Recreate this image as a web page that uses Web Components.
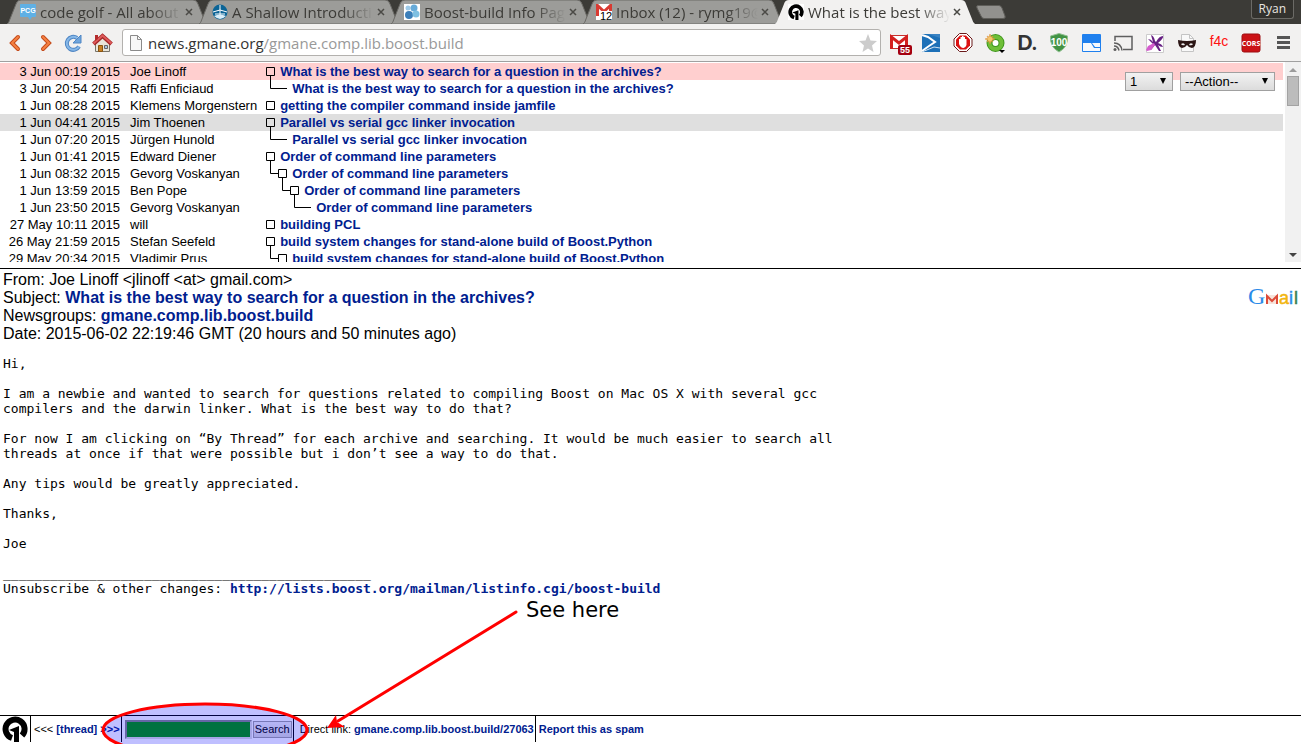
<!DOCTYPE html>
<html lang="en">
<head>
<meta charset="utf-8">
<title>What is the best way to search for a question in the archives?</title>
<style>
  html, body {
    height: 100%;
  }
  body {
    margin: 0;
    display: flex;
    flex-direction: column;
    position: relative;
    overflow: hidden;
    background: #fff;
    color: #000;
    font-family: "Liberation Sans", Arial, sans-serif;
    --link: #00208f;
    --chrome: #f2f1f0;
    --ui-font: "Open Sans", "Noto Sans", sans-serif;
  }
  mail-message {
    flex: 1;
  }
</style>
</head>
<body>
  <tab-strip user="Ryan">
    <browser-tab label="code golf - All about">
      <svg slot="icon" width="16" height="16" viewBox="0 0 16 16"><path fill="#5fb0e5" d="M1 0h14q1 0 1 1v11q0 1-1 1h-3l-2 3-2-3H1q-1 0-1-1V1q0-1 1-1z"/><text x="8" y="9" font-size="7" font-weight="bold" text-anchor="middle" fill="#fff" font-family="Liberation Sans, sans-serif">PCG</text></svg>
    </browser-tab>
    <browser-tab label="A Shallow Introducti">
      <svg slot="icon" width="16" height="16" viewBox="0 0 16 16"><circle cx="8" cy="8" r="7.5" fill="#0b6496"/><path d="M8 1v10M1 8l7-2 7 2M3 10h10" stroke="#fff" fill="none"/><path d="M2 12q6-3 12 0-6 6-12 0z" fill="#d9edf7"/></svg>
    </browser-tab>
    <browser-tab label="Boost-build Info Pag">
      <svg slot="icon" width="16" height="16" viewBox="0 0 16 16"><path fill="#fff" d="M0 0h16v16H0z"/><circle cx="4" cy="4" r="2.5" fill="#9ecae8"/><circle cx="10" cy="4" r="3.5" fill="#67abd9"/><circle cx="5" cy="11" r="4" fill="#3d7fb9"/><circle cx="12" cy="10" r="3.5" fill="#7fc0e2"/></svg>
    </browser-tab>
    <browser-tab label="Inbox (12) - rymg19@">
      <svg slot="icon" width="16" height="16" viewBox="0 0 16 16"><path fill="#fff" d="M0 0h16v16H0z"/><path d="M1.500 12V1.500L8 7.500l6.500-6V8" fill="none" stroke="#d93a32" stroke-width="3"/><path fill="#fff" d="M3 7h13v9H3z"/><text x="10" y="16" font-size="11" text-anchor="middle" font-family="Liberation Sans, sans-serif">12</text></svg>
    </browser-tab>
    <browser-tab label="What is the best way" active>
      <svg slot="icon" width="16" height="16" viewBox="0 0 26 26"><path fill="#fff" d="M0 0h26v26H0z"/><path d="M10 22A9.500 9.500 0 1 1 20 19.500" fill="none" stroke="#000" stroke-width="6"/><path d="M7 14l10-4v16h-5V16z"/></svg>
    </browser-tab>
  </tab-strip>

  <browser-toolbar host="news.gmane.org" path="/gmane.comp.lib.boost.build"></browser-toolbar>
  <thread-list></thread-list>

  <mail-message>
    <span slot="from">Joe Linoff &lt;jlinoff &lt;at&gt; gmail.com&gt;</span>
    <mail-link slot="subject" href="#subject">What is the best way to search for a question in the archives?</mail-link>
    <mail-link slot="groups" href="#group">gmane.comp.lib.boost.build</mail-link>
    <span slot="date">2015-06-02 22:19:46 GMT (20 hours and 50 minutes ago)</span>
    <span slot="body">Hi,

I am a newbie and wanted to search for questions related to compiling Boost on Mac OS X with several gcc
compilers and the darwin linker. What is the best way to do that?

For now I am clicking on “By Thread” for each archive and searching. It would be much easier to search all
threads at once if that were possible but i don’t see a way to do that.

Any tips would be greatly appreciated.

Thanks,

Joe

_______________________________________________
Unsubscribe &amp; other changes: <mail-link href="#list">http://lists.boost.org/mailman/listinfo.cgi/boost-build</mail-link></span>
  </mail-message>

  <archive-footer></archive-footer>
  <callout-note label="See here"></callout-note>

<script>
//Link used in message headers and bodies
class MailLink extends HTMLElement {
  constructor() {
    super();
    this._root = this.attachShadow({ mode: "open" });
  }

  connectedCallback() {
    //No line breaks round the link, it can stand in preformatted text
    this._root.innerHTML = `<style>
      :host { display: inline; }
      a { color: var(--link); font-weight: bold; text-decoration: none; }
    </style><a href="${this.getAttribute("href")}"><slot></slot></a>`;
  }
}
customElements.define("mail-link", MailLink);

class BrowserTab extends HTMLElement {
  constructor() {
    super();
    this._root = this.attachShadow({ mode: "open" });
  }

  connectedCallback() {
    const active = this.hasAttribute("active");
    this._root.innerHTML = `
    <style>
      :host {
        display: flex;
        align-items: center;
        flex: 0 1 200px;
        box-sizing: border-box;
        min-width: 0;
        height: 24px;
        margin-right: -8px;
        padding: 0 13px;
        position: relative;
        color: #3c3b37;
      }
      :host([active]) { z-index: 1; }
      .shape {
        position: absolute;
        inset: 0;
        width: 100%;
        height: 100%;
      }
      ::slotted(svg), .title, button { position: relative; }
      ::slotted(svg) { flex: none; }
      .title {
        flex: 1;
        margin: 0 2px 0 4px;
        overflow: hidden;
        white-space: nowrap;
        font: 15px/22px var(--ui-font);
        -webkit-mask-image: linear-gradient(to left, transparent, #000 32px);
        mask-image: linear-gradient(to left, transparent, #000 32px);
      }
      button {
        flex: none;
        display: flex;
        width: 10px;
        height: 24px;
        padding: 0;
        align-items: center;
        border: 0;
        background: none;
      }
    </style>
    <svg class="shape" viewBox="0 0 200 24" preserveAspectRatio="none" aria-hidden="true">
      <path d="M0 24Q2 23 3 19L9 4Q10 0 14 0H186Q190 0 191 4L197 19Q198 23 200 24Z"
        fill="${active ? "#f2f1f0" : "#9c9c99"}" stroke="${active ? "none" : "#6b6a66"}"/>
    </svg>
    <slot name="icon"></slot>
    <span class="title">${this.getAttribute("label")}</span>
    <button type="button" aria-label="Close tab">
      <svg width="10" height="10" viewBox="0 0 10 10"><path d="M2 2l6 6M8 2l-6 6" stroke="#4b4a46" stroke-width="1.500"/></svg>
    </button>`;
  }
}
customElements.define("browser-tab", BrowserTab);

class TabStrip extends HTMLElement {
  constructor() {
    super();
    this._root = this.attachShadow({ mode: "open" });
  }

  connectedCallback() {
    this._root.innerHTML = `
    <style>
      :host {
        display: flex;
        flex: none;
        height: 24px;
        padding: 0 7px;
        background: #3c3b37;
      }
      .tabs { display: flex; flex: 1; min-width: 0; }
      .new {
        flex: none;
        width: 32px;
        height: 24px;
        margin-left: 8px;
        padding: 0;
        border: 0;
        background: none;
      }
      .user {
        flex: none;
        height: 19px;
        padding: 0 7px;
        border: 1px solid #6b6a66;
        border-top: 0;
        border-radius: 0 0 3px 3px;
        background: #33322e;
        color: #e8e6e0;
        font: 12px/18px var(--ui-font);
      }
    </style>
    <div class="tabs">
      <slot></slot>
      <button class="new" type="button" aria-label="New tab">
        <svg width="32" height="24" viewBox="0 0 32 24"><path d="M3 5.500H24Q26 5.500 27 8L30 16Q31 18.500 28 18.500H9Q7 18.500 6 16L2 8Q1 5.500 3 5.500z" fill="#92918e" stroke="#5e5d59"/></svg>
      </button>
    </div>
    <button class="user" type="button">${this.getAttribute("user")}</button>`;
  }
}
customElements.define("tab-strip", TabStrip);

//Toolbar icons, all drawn in a 24px square
const textAttrs = `font-family="Liberation Sans, sans-serif" font-weight="bold" text-anchor="middle"`;
const extensions = [
  ["Mail checker", `<path fill="#fff" stroke="#c9302c" d="M3.500 4.500h17v13h-17z"/><path d="M4.500 18V6l7.500 6 7.500-6v9" fill="none" stroke="#d3201f" stroke-width="3"/><rect x="11" y="14" width="14" height="10" rx="2" fill="#a4000f"/><text x="18" y="22" font-size="9" fill="#fff" ${textAttrs}>55</text>`],
  ["Scripts", `<path fill="#1d70b7" d="M3 3h18v18H3z"/><path d="M3 4l6 2 7 5-6 4-7 5" fill="none" stroke="#fff" stroke-width="2"/><path d="M3 21l12-5 6 1" fill="none" stroke="#cfe2f2"/><path d="M9 3l12 4V3z" fill="#3a83c3"/>`],
  ["Ad blocker", `<path d="M8.500 2.500h7l5.500 5.500v7l-5.500 5.500h-7L3 15V8z" fill="#fff" stroke="#6b1a1a"/><path d="M9 4.500h6L19 8.500v6L15 18.500H9L5 14.500v-6z" fill="#dc1313"/><path fill="#fff" d="M8 8h1.500v3V6H11v4V5h1.500v5V6H14v5V8h1.500v6q-1 3-3 3-3 0-4.500-4z"/>`],
  ["Image search", `<circle cx="12.500" cy="12" r="6" fill="#fff" stroke="#3f961d" stroke-width="6"/><circle cx="12.500" cy="12" r="6" fill="none" stroke="#6fbf38" stroke-width="4"/><path fill="#f5c56b" stroke="#d9872f" stroke-width=".5" d="M7 3l1 3 2-1-1 2 3 1-3 1 1 2-2-1-1 3-1-3-2 1 1-2-3-1 3-1-1-2 2 1z"/><path d="M16 19h6l-3 3z"/>`],
  ["Disconnect", `<text x="12" y="19" font-size="20" fill="#333" font-family="Lato, sans-serif" font-weight="900" text-anchor="middle">D.</text>`],
  ["Shield", `<path fill="#429344" stroke="#8fbf8f" d="M12 2.500l8.500 2.500q1 11-8.500 16-9.500-5-8.500-16z"/><text x="12" y="15" font-size="10" fill="#fff" ${textAttrs}>100</text>`],
  ["Window", `<rect x="3" y="3" width="19" height="18" rx="1" fill="#1f80ee"/><path fill="#f7f9fc" d="M4 12h8l3 5h6v3H4z"/><path fill="#f7f9fc" d="M13 12h8v4h-5z"/>`],
  ["Cast", `<path d="M4 10V5.500h17v13h-9" fill="none" stroke="#5f5f5f" stroke-width="1.500"/><path d="M3 12q7 0 8 7.500M3 15q4 0 5 4.500" fill="none" stroke="#5f5f5f" stroke-width="1.500"/><circle cx="4" cy="18.500" r="1.500" fill="#5f5f5f"/>`],
  ["Insect", `<path fill="#fff" stroke="#ccc" d="M3.500 3.500h17v18h-17z"/><path fill="#672083" d="M8 4q3 1 4 6l1 1q3-6 7-6 1 2-5 7 4 1 5 4-3 0-5-2l3 6-2 0-4-6-4 5-1-1 3-5-5-5q3 0 5 3z"/><path d="M3 19l2-4 6-3 1 2-4 5-4 1z" fill="#d55cce"/>`],
  ["Incognito filter", `<path fill="#f9f9f9" stroke="#c4c4c4" d="M6.500 3.500h8l4 4v13h-12z"/><path d="M14.500 3.500v4h4" fill="none" stroke="#c4c4c4"/><path d="M3 9q9 2 18 0 0 7-4 8-3 0-5-3-2 3-5 3-4-1-4-8z" fill="#2b1514"/><path d="M6 13q3-2 4 1-3 1-4-1zM14 14q1-3 4-1-1 2-4 1z" fill="#eee"/>`],
  ["f4c", `<text x="12" y="15" font-size="14" fill="#f11" font-family="Liberation Sans, sans-serif" text-anchor="middle">f4c</text>`],
  ["CORS", `<rect x="3" y="3" width="18" height="18" rx="2" fill="#cb1216" stroke="#9d0d10"/><text x="12" y="15" font-size="7" fill="#fff" font-family="Open Sans, sans-serif" font-weight="bold" text-anchor="middle">CORS</text>`]
];
const navButtons = [
  ["Back", `<path d="M15 6l-6 6 6 6" fill="none" stroke="#c44a1a" stroke-width="4" stroke-linecap="round"/><path d="M15 6l-6 6 6 6" fill="none" stroke="#f58142" stroke-width="2" stroke-linecap="round"/>`],
  ["Forward", `<path d="M11 6l6 6-6 6" fill="none" stroke="#c44a1a" stroke-width="4" stroke-linecap="round"/><path d="M11 6l6 6-6 6" fill="none" stroke="#f58142" stroke-width="2" stroke-linecap="round"/>`],
  ["Reload", `<path d="M18 15.500A6.500 6.500 0 1 1 16 7" fill="none" stroke="#4f86c4" stroke-width="4"/><path d="M18 15.500A6.500 6.500 0 1 1 16 7" fill="none" stroke="#86b8e8" stroke-width="2"/><path d="M20 4v8h-8z" fill="#6fa5dc" stroke="#4f86c4"/>`],
  ["Home", `<path fill="#e9e6da" stroke="#77746b" d="M5.500 11v9.500h14V11l-7-6z"/><path d="M3.500 13L12.500 5l9 8" fill="none" stroke="#a72828" stroke-width="4"/><path d="M3.500 12.500l9-8 9 8" fill="none" stroke="#dd5a5a" stroke-width="2"/><path fill="#b42c2c" d="M5 4h3v4l-3 2z"/><path fill="#c98124" stroke="#8a5510" d="M8.500 14.500h4v6h-4z"/><path fill="#a9c6e4" stroke="#666" d="M14.500 14.500h3v3h-3z"/>`]
];

class BrowserToolbar extends HTMLElement {
  constructor() {
    super();
    this._root = this.attachShadow({ mode: "open" });
  }

  connectedCallback() {
    const icon = ([name, art]) => `
      <button type="button" aria-label="${name}"><svg width="24" height="24" viewBox="0 0 24 24" overflow="visible">${art}</svg></button>`;
    this._root.innerHTML = `
    <style>
      :host {
        display: flex;
        flex: none;
        align-items: center;
        height: 37px;
        background: var(--chrome);
        border-bottom: 1px solid #a0a0a0;
      }
      .group { display: flex; flex: none; }
      button {
        display: flex;
        align-items: center;
        justify-content: center;
        width: 32px;
        height: 32px;
        padding: 0;
        border: 0;
        background: none;
      }
      .nav { padding-right: 6px; }
      .nav button { width: 29px; }
      .location {
        flex: 1;
        display: flex;
        align-items: center;
        min-width: 0;
        height: 25px;
        margin-right: 2px;
        padding-left: 5px;
        border: 1px solid #b3b1ae;
        border-radius: 3px;
        background: #fff;
      }
      .url {
        flex: 1;
        margin-left: 4px;
        color: #999;
        font: 15px/24px var(--ui-font);
        text-decoration: none;
        white-space: nowrap;
        overflow: hidden;
      }
      .url span { color: #333; }
      .location button { width: 24px; height: 24px; }
      .menu { width: 34px; }
    </style>
    <div class="group nav">${navButtons.map(icon).join("")}</div>
    <div class="location">
      <svg width="16" height="18" viewBox="0 0 16 18" aria-hidden="true"><path d="M2.500 1.500h7l4 4v11h-11z" fill="#f7f7f7" stroke="#8a8a8a"/><path d="M9.500 1.500v4h4" fill="none" stroke="#8a8a8a"/></svg>
      <a class="url" href="#location"><span>${this.getAttribute("host")}</span>${this.getAttribute("path")}</a>
      <button type="button" aria-label="Bookmark"><svg width="20" height="20" viewBox="0 0 20 20"><path fill="#ccc" d="M10 1l2.500 6.500 6.500.500-5 4.500 1.500 6.500-5.500-3.500L4.500 19 6 12.500 1 8l6.500-.500z"/></svg></button>
    </div>
    <div class="group">
      ${extensions.map(icon).join("")}
      <button class="menu" type="button" aria-label="Menu"><svg width="14" height="14" viewBox="0 0 14 14"><path fill="#555" d="M0 0h13v3H0zM0 5h13v3H0zM0 10h13v3H0z"/></svg></button>
    </div>`;
  }
}
customElements.define("browser-toolbar", BrowserToolbar);

//date, author, subject, level, has box, has reply, row class
const best = "What is the best way to search for a question in the archives?";
const gcc = "Parallel vs serial gcc linker invocation";
const order = "Order of command line parameters";
const build = "build system changes for stand-alone build of Boost.Python";
const threads = [
  ["3 Jun 00:19 2015", "Joe Linoff", best, 0, true, true, "current"],
  ["3 Jun 20:54 2015", "Raffi Enficiaud", best, 1, false, false, ""],
  ["1 Jun 08:28 2015", "Klemens Morgenstern", "getting the compiler command inside jamfile", 0, true, false, ""],
  ["1 Jun 04:41 2015", "Jim Thoenen", gcc, 0, true, true, "hover"],
  ["1 Jun 07:20 2015", "Jürgen Hunold", gcc, 1, false, false, ""],
  ["1 Jun 01:41 2015", "Edward Diener", order, 0, true, true, ""],
  ["1 Jun 08:32 2015", "Gevorg Voskanyan", order, 1, true, true, ""],
  ["1 Jun 13:59 2015", "Ben Pope", order, 2, true, true, ""],
  ["1 Jun 23:50 2015", "Gevorg Voskanyan", order, 3, false, false, ""],
  ["27 May 10:11 2015", "will", "building PCL", 0, true, false, ""],
  ["26 May 21:59 2015", "Stefan Seefeld", build, 0, true, true, ""],
  ["29 May 20:34 2015", "Vladimir Prus", build, 1, true, false, ""]
];

class ThreadList extends HTMLElement {
  constructor() {
    super();
    this._root = this.attachShadow({ mode: "open" });
  }

  //Box and connector lines in front of a subject
  branch(level, box, reply) {
    const x = level * 12;
    let d = "";
    if (level > 0) {
      d += `M${x - 7.5} 0V8.500H${box ? x : x + 9}`;
    }
    if (box) {
      d += `M${x + 0.5} 4.500h8v8h-8z`;
    }
    if (reply) {
      d += `M${x + 4.5} 12V17`;
    }
    return `<svg width="${x + 14}" height="17" aria-hidden="true"><path d="${d}" fill="none" stroke="#000"/></svg>`;
  }

  connectedCallback() {
    const rows = threads.map(([date, author, subject, level, box, reply, state]) => `
      <tr class="${state}">
        <td class="date">${date}</td>
        <td class="author">${author}</td>
        <td><div class="subject">${this.branch(level, box, reply)}<a href="#article">${subject}</a></div></td>
      </tr>`).join("");
    this._root.innerHTML = `
    <style>
      :host {
        display: flex;
        flex: none;
        gap: 2px;
        height: 200px;
        padding: 0 0 6px;
        border-bottom: 1px solid #000;
        position: relative;
        font-size: 13px;
        line-height: 17px;
      }
      .rows { flex: 1; overflow: hidden; padding-top: 1px; }
      table { width: 100%; border-collapse: collapse; }
      td { padding: 0; height: 17px; white-space: nowrap; }
      .current { background: #ffcfcf; }
      .hover { background: #dfdfdf; }
      .date { width: 120px; text-align: right; }
      .author { width: 127px; padding: 0 0 0 10px; }
      td:last-child { padding-left: 9px; }
      .subject { display: flex; height: 17px; }
      .subject svg { flex: none; }
      a { color: var(--link); font-weight: bold; text-decoration: none; }
      .actions {
        position: absolute;
        top: 10px;
        right: 26px;
        display: flex;
        gap: 7px;
      }
      .pick { position: relative; display: flex; }
      select {
        appearance: none;
        box-sizing: border-box;
        height: 19px;
        padding: 0 20px 0 4px;
        border: 1px solid #a0a0a0;
        border-radius: 0;
        background: linear-gradient(#f2f2f2, #dcdcdc);
        color: #000;
        font: 13px/17px "Liberation Sans", Arial, sans-serif;
      }
      .page { width: 48px; }
      .action { width: 95px; }
      .pick svg { position: absolute; right: 7px; top: 6px; pointer-events: none; }
      .scroll {
        flex: none;
        display: flex;
        flex-direction: column;
        align-items: center;
        width: 16px;
        background: #f1f1f1;
      }
      .track { flex: 1; }
      .thumb {
        box-sizing: border-box;
        width: 12px;
        height: 30px;
        border: 1px solid #a3a3a3;
        background: #bcbcbc;
      }
    </style>
    <div class="rows"><table aria-label="Threads">${rows}</table></div>
    <div class="scroll" aria-hidden="true">
      <svg width="16" height="14"><path fill="#9c9c9c" d="M8 6l4 4H4z"/></svg>
      <div class="track"><div class="thumb"></div></div>
      <svg width="16" height="14"><path fill="#444" d="M4 5h8l-4 4z"/></svg>
    </div>
    <div class="actions">
      <label class="pick"><select class="page" aria-label="Page"><option>1</option></select><svg width="6" height="6"><path d="M0 0h6L3 6z"/></svg></label>
      <label class="pick"><select class="action" aria-label="Action"><option>--Action--</option></select><svg width="6" height="6"><path d="M0 0h6L3 6z"/></svg></label>
    </div>`;
  }
}
customElements.define("thread-list", ThreadList);

class MailMessage extends HTMLElement {
  constructor() {
    super();
    this._root = this.attachShadow({ mode: "open" });
  }

  connectedCallback() {
    this._root.innerHTML = `
    <style>
      :host {
        display: block;
        min-height: 0;
        padding: 2px 3px 0;
        overflow: hidden;
        font-size: 16px;
        line-height: 18px;
      }
      header { display: flex; justify-content: space-between; align-items: flex-start; }
      .face { flex: none; margin-top: 12px; }
      pre {
        margin: 13px 0 0;
        font: 13px/15px "DejaVu Sans Mono", monospace;
      }
    </style>
    <header>
      <div>
        <div>From: <slot name="from"></slot></div>
        <div>Subject: <slot name="subject"></slot></div>
        <div>Newsgroups: <slot name="groups"></slot></div>
        <div>Date: <slot name="date"></slot></div>
      </div>
      <svg class="face" width="50" height="24" viewBox="0 0 50 24" role="img" aria-label="Gmail">
        <text x="0" y="21" font-size="24" fill="#2b8be8" font-family="Liberation Serif, serif">G</text>
        <path fill="#f6e4dc" d="M18 12h12v9H18z"/><path d="M19 21v-8l5 5 5-5v8" fill="none" stroke="#dd4b39" stroke-width="2"/>
        <g font-size="18" font-family="Liberation Sans, sans-serif" stroke-width=".5"><text x="31" y="21" fill="#f2b50f" stroke="#f2b50f">a</text><text x="41" y="21" fill="#2b8be8" stroke="#2b8be8">i</text><text x="46" y="21" fill="#3d7d55" stroke="#3d7d55">l</text></g>
      </svg>
    </header>
    <pre><slot name="body"></slot></pre>`;
  }
}
customElements.define("mail-message", MailMessage);

class ArchiveFooter extends HTMLElement {
  constructor() {
    super();
    this._root = this.attachShadow({ mode: "open" });
  }

  connectedCallback() {
    this._root.innerHTML = `
    <style>
      :host {
        display: flex;
        flex: none;
        height: 26px;
        padding-bottom: 2px;
        border-top: 1px solid #000;
        font-size: 11px;
        line-height: 26px;
        white-space: nowrap;
      }
      .cell {
        display: flex;
        align-items: center;
        padding: 0 1px 0 3px;
      }
      .cell + .cell { border-left: 1px solid #000; }
      .logo { padding: 0 2px; }
      .text { display: block; }
      .direct { padding-left: 6px; }
      a { color: var(--link); font-weight: bold; text-decoration: none; }
      form { display: flex; align-items: center; gap: 1px; margin: 0; }
      input {
        box-sizing: border-box;
        width: 127px;
        height: 19px;
        padding: 1px;
        border: 2px inset #ddd;
        background: #090;
        font: inherit;
      }
      button {
        box-sizing: border-box;
        width: 39px;
        height: 17px;
        padding: 0;
        border: 1px solid #a0a0a0;
        background: linear-gradient(#f2f2f2, #dcdcdc);
        color: #000;
        font: 11px/15px "Liberation Sans", Arial, sans-serif;
      }
    </style>
    <a class="cell logo" href="#home" aria-label="Gmane">
      <svg width="26" height="26" viewBox="0 0 26 26"><path d="M10 22A9.500 9.500 0 1 1 20 19.500" fill="none" stroke="#000" stroke-width="6"/><path d="M7 14l10-4v16h-5V16z"/></svg>
    </a>
    <div class="cell text">&lt;&lt;&lt; <a href="#thread">[thread]</a> <a href="#next">&gt;&gt;&gt;</a></div>
    <div class="cell">
      <form>
        <input type="text" aria-label="Search the archive">
        <button type="button">Search</button>
      </form>
    </div>
    <div class="cell text direct">Direct link: <a href="#direct">gmane.comp.lib.boost.build/27063</a></div>
    <div class="cell text"><a href="#spam">Report this as spam</a></div>`;
  }
}
customElements.define("archive-footer", ArchiveFooter);

//Hand drawn ring and arrow lying over the footer search
class CalloutNote extends HTMLElement {
  constructor() {
    super();
    this._root = this.attachShadow({ mode: "open" });
  }

  connectedCallback() {
    this._root.innerHTML = `
    <style>
      :host {
        display: block;
        position: absolute;
        left: 100px;
        bottom: 0;
        pointer-events: none;
      }
      svg { display: block; }
    </style>
    <svg width="540" height="154" viewBox="0 0 540 154">
      <ellipse cx="105" cy="140" rx="102" ry="26" fill="#00f" fill-opacity=".25" stroke="#f00" stroke-width="3"/>
      <path d="M416 22L238 131" stroke="#f00" stroke-width="3" stroke-linecap="round"/>
      <path d="M227 138l9-13 1 7 8 5z" fill="#f00"/>
      <text x="426" y="27" font-size="21" font-family="DejaVu Sans, sans-serif">${this.getAttribute("label")}</text>
    </svg>`;
  }
}
customElements.define("callout-note", CalloutNote);
</script>
</body>
</html>
